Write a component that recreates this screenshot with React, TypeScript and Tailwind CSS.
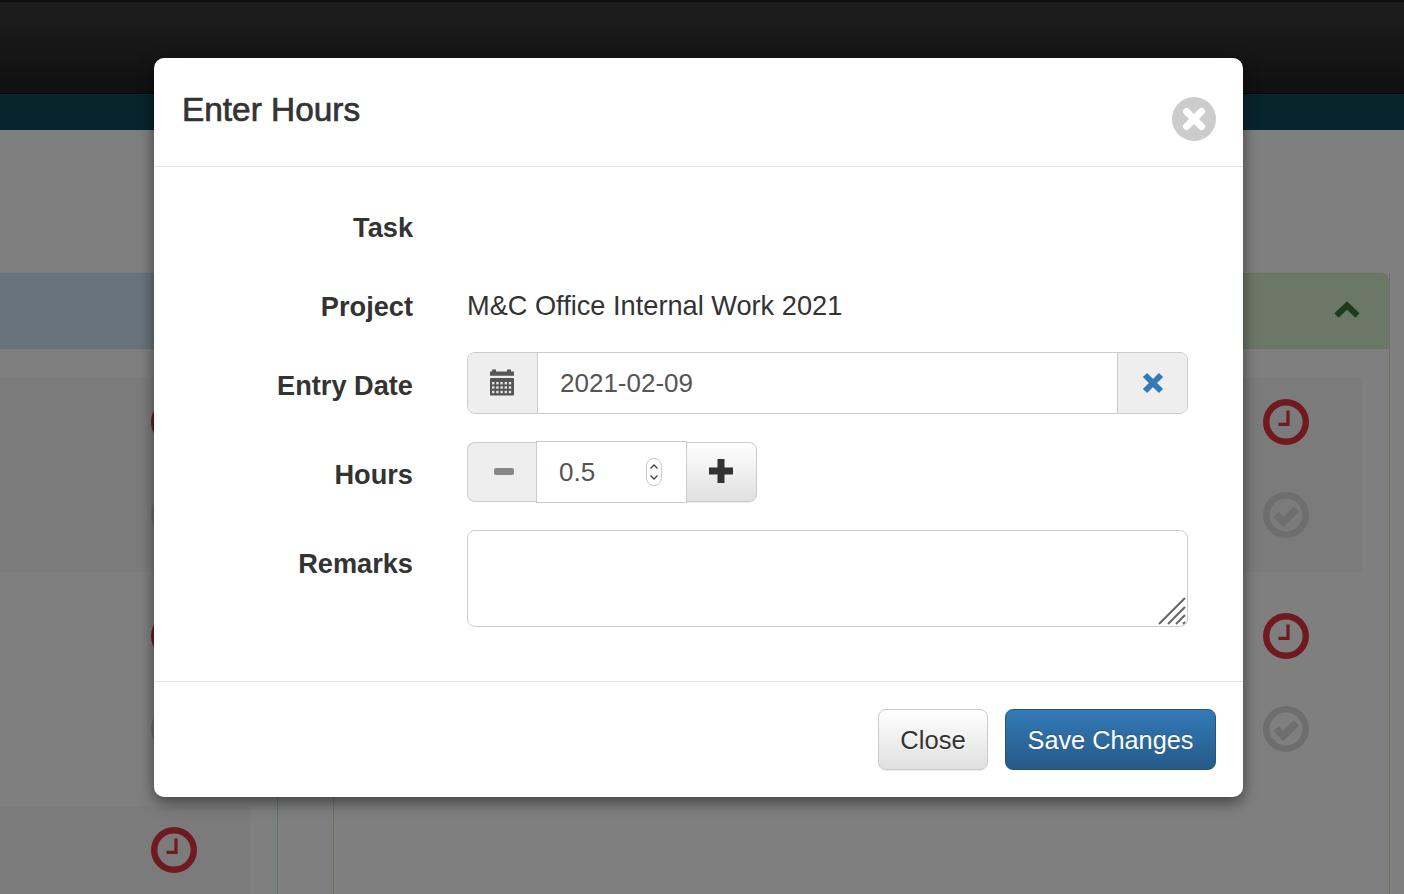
const sans = "font-['Liberation_Sans',Arial,sans-serif]";

function ClockIcon() {
  return (
    <svg viewBox="0 0 46 46" className="w-[46px] h-[46px]">
      <circle cx="23" cy="23" r="19.8" fill="none" stroke="#e0323f" strokeWidth="6.4" />
      <path d="M25 11.5V25.3H15.500" fill="none" stroke="#e0323f" strokeWidth="3.2" />
    </svg>
  );
}

function CheckIcon() {
  return (
    <svg viewBox="0 0 46 46" className="w-[46px] h-[46px]">
      <circle cx="23" cy="23" r="19.7" fill="none" stroke="#dcdcdc" strokeWidth="6.6" />
      <path d="M13 22.500L20.500 30L33.500 17" fill="none" stroke="#dcdcdc" strokeWidth="7.5" />
    </svg>
  );
}

function CalendarIcon() {
  const cols = [2, 6.2, 10.4, 14.6, 18.8];
  const rows = [13, 17.3, 21.8];
  return (
    <svg viewBox="0 0 24 27" className="w-6 h-[27px]">
      <path fill="#555555" d="M0 2.500H2V0.500H6V2.500H17V0.500H21V2.500H24V6.700H0Z" />
      <rect x="0" y="9" width="24" height="17.500" rx="1" fill="#555555" />
      {rows.map((y) =>
        cols.map((x) => <rect key={`${x}-${y}`} x={x} y={y} width="2.400" height="2.400" fill="#e4e4e4" />)
      )}
    </svg>
  );
}

function StatusRow({ band, check = true }: { band?: boolean; check?: boolean }) {
  return (
    <div className={`h-[194px] mb-5 flex justify-end ${band ? "bg-[#f6f6f6]" : ""}`}>
      <div className="w-[152px] pt-[21px] flex flex-col items-center gap-[47px]">
        <ClockIcon />
        {check && <CheckIcon />}
      </div>
    </div>
  );
}

function BackgroundPage() {
  return (
    <div className="h-screen overflow-hidden bg-white">
      <div className="h-[94px] border-t-2 border-t-[#1c1c1c] border-b border-b-[#080808] bg-gradient-to-b from-[#3c3c3c] to-[#202020]" />
      <div className="h-9 bg-[#10485a]" />
      <div className="pt-[143px] grid grid-cols-[278px_55px_1057px]">
        <div className="border-r border-[#bce8f1] h-[700px]">
          <div className="h-[76px] bg-[#cfe9f6] border-y border-[#bce8f1]" />
          <div className="pt-[29px] pr-[27px]">
            <StatusRow band />
            <StatusRow />
            <StatusRow band check={false} />
          </div>
        </div>
        <div />
        <div className="border-x border-[#d6e9c6] h-[700px]">
          <div className="h-[76px] bg-[#d8f0cf] border-y border-[#d6e9c6] rounded-tr-lg flex items-center justify-end pr-[29px]">
            <svg viewBox="0 0 26 18" className="w-[26px] h-[18px] mb-[3px]">
              <path d="M2.5 14.5L13 4.5L23.5 14.5" fill="none" stroke="#3c763d" strokeWidth="6" />
            </svg>
          </div>
          <div className="pt-[29px] pr-[27px]">
            <StatusRow band />
            <StatusRow />
          </div>
        </div>
      </div>
    </div>
  );
}

function FormRow({ label, height, children }: { label: string; height: string; children?: React.ReactNode }) {
  return (
    <div className={`flex ${height}`}>
      <div className="w-[231px] mr-[54px] pt-[14px] text-right text-[27.2px] leading-10 font-bold text-[#333]">{label}</div>
      <div className="w-[721px]">{children}</div>
    </div>
  );
}

export default function App() {
  return (
    <div className={`relative h-screen overflow-hidden ${sans}`}>
      <BackgroundPage />
      <div className="absolute inset-0 bg-black/50" />

      <div className="absolute left-[154px] top-[58px] w-[1089px] h-[739px] bg-white rounded-[10px] shadow-[0_5px_15px_rgba(0,0,0,0.5)] flex flex-col">
        <div className="h-[109px] border-b border-[#e5e5e5] pl-7 pr-[27px] flex justify-between shrink-0">
          <h4 className="pt-[29px] text-[33.4px] leading-[46px] text-[#333] [-webkit-text-stroke:0.7px_#333]">Enter Hours</h4>
          <svg viewBox="0 0 44 44" className="w-11 h-11 mt-[39px]">
            <circle cx="22" cy="22" r="22" fill="#cccccc" />
            <path d="M14.500 14.500L29.500 29.500M29.500 14.500L14.500 29.500" stroke="#ffffff" strokeWidth="7" strokeLinecap="round" />
          </svg>
        </div>

        <div className="pt-[27px] pl-7 flex-1">
          <FormRow label="Task" height="h-[79px]" />
          <FormRow label="Project" height="h-[79px]">
            <div className="pt-[13px] text-[27.2px] leading-10 text-[#333]">M&amp;C Office Internal Work 2021</div>
          </FormRow>
          <FormRow label="Entry Date" height="h-[89px]">
            <div className="flex h-[62px] border border-[#ccc] rounded-lg overflow-hidden">
              <div className="w-[70px] bg-[#eeeeee] border-r border-[#ccc] flex items-center justify-center pr-[2px] pb-[1px]">
                <CalendarIcon />
              </div>
              <input
                readOnly
                value="2021-02-09"
                className="flex-1 min-w-0 pl-[22px] pr-5 text-[26px] text-[#555] outline-none bg-white"
              />
              <div className="w-[70px] bg-[#eeeeee] border-l border-[#ccc] flex items-center justify-center">
                <svg viewBox="0 0 24 24" className="w-6 h-6">
                  <path d="M4 4L20 20M20 4L4 20" stroke="#337ab7" strokeWidth="6" />
                </svg>
              </div>
            </div>
          </FormRow>
          <FormRow label="Hours" height="h-[89px]">
            <div className="flex items-center h-[62px]">
              <div className="w-[70px] h-[60px] bg-[#eeeeee] border border-[#ccc] border-r-0 rounded-l-lg flex items-center justify-center pl-[3px] pb-[2px]">
                <div className="w-5 h-[7px] bg-[#888888] rounded-[2px]" />
              </div>
              <div className="relative z-10 -ml-[1px] w-[151px] h-[62px] bg-white border border-[#ccc] flex items-center justify-between pl-[22px] pr-[24px]">
                <span className="text-[26px] text-[#555]">0.5</span>
                <svg viewBox="0 0 16 28" className="w-4 h-7">
                  <rect x="0.5" y="0.5" width="15" height="27" rx="7.5" fill="#fff" stroke="#c8c8c8" />
                  <path d="M4.500 10.500L8 7L11.500 10.500M4.500 17.500L8 21L11.500 17.500" fill="none" stroke="#444" strokeWidth="1.300" />
                </svg>
              </div>
              <div className="-ml-[1px] w-[71px] h-[60px] border border-[#ccc] rounded-r-lg bg-gradient-to-b from-white to-[#e0e0e0] shadow-[0_1px_1px_rgba(0,0,0,0.08)] flex items-center justify-center pr-[2px] pb-[2px]">
                <svg viewBox="0 0 26 26" className="w-[26px] h-[26px]">
                  <path d="M13 1V25M1 13H25" stroke="#333333" strokeWidth="7" />
                </svg>
              </div>
            </div>
          </FormRow>
          <FormRow label="Remarks" height="h-[97px]">
            <div className="relative h-[97px]">
              <textarea readOnly className="block w-full h-full resize-none border border-[#ccc] rounded-lg outline-none" />
              <svg viewBox="0 0 28 28" className="absolute right-[2px] bottom-[2px] w-7 h-7 pointer-events-none">
                <path d="M1 27L27 1M10 27L27 10M18 27L27 18M25 27L27 25" stroke="#666666" strokeWidth="2" />
              </svg>
            </div>
          </FormRow>
        </div>

        <div className="h-[116px] border-t border-[#e5e5e5] pt-[27px] pr-[27px] flex justify-end items-start gap-[17px] shrink-0">
          <button className="w-[110px] h-[61px] rounded-lg border border-[#ccc] bg-gradient-to-b from-white to-[#e0e0e0] pt-[1px] text-[25.6px] text-[#333] [text-shadow:0_1px_0_#fff] shadow-[0_1px_1px_rgba(0,0,0,0.08)]">
            Close
          </button>
          <button className="w-[211px] h-[61px] rounded-lg border border-[#245580] bg-gradient-to-b from-[#337ab7] to-[#265a88] pt-[2px] text-[25.3px] text-white [text-shadow:0_-1px_0_rgba(0,0,0,0.2)]">
            Save Changes
          </button>
        </div>
      </div>
    </div>
  );
}
